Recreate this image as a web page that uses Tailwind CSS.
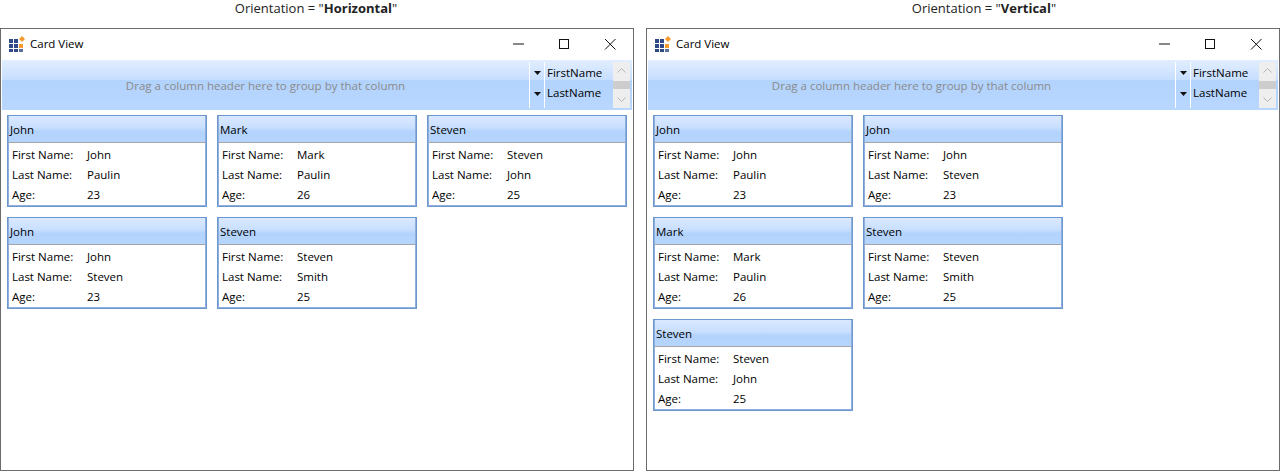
<!DOCTYPE html>
<html>
<head>
<meta charset="utf-8">
<script src="https://cdn.jsdelivr.net/npm/@tailwindcss/browser@4"></script>
</head>
<body class="bg-white">
<div class="w-[1280px] h-[471px] overflow-hidden flex gap-[12px] font-['Open_Sans',sans-serif] text-[11.5px] text-[#000]">

  <section class="w-[634px] flex flex-col">
    <p class="h-[28px] text-center text-[13px] leading-[16px] text-[#222] pr-[2px]">Orientation = "<b>Horizontal</b>"</p>
    <div class="h-[443px] border border-[#6b6b6b] flex flex-col">
      <div class="h-[31px] shrink-0 flex items-center pl-[8px] pb-[2px]">
        <svg width="16" height="16" viewBox="0 0 16 16"><rect x="0" y="3" width="4" height="4" fill="#2f4a86"/><rect x="5" y="3" width="4" height="4" fill="#2f4a86"/><rect x="0" y="8" width="4" height="4" fill="#2f4a86"/><rect x="5" y="8" width="4" height="4" fill="#2f4a86"/><rect x="10" y="8" width="4" height="4" fill="#f59b2f"/><rect x="0" y="13" width="4" height="3" fill="#2f4a86"/><rect x="5" y="13" width="4" height="3" fill="#2f4a86"/><rect x="10" y="13" width="4" height="3" fill="#5a6f9e"/><path d="M13 0l3 3-3 3-3-3z" fill="#f59b2f"/></svg>
        <span class="ml-[5px]">Card View</span>
        <div class="ml-auto flex items-center">
          <svg class="w-[46px] h-[16px]" viewBox="0 0 46 16"><path d="M18 8h11" stroke="#111" fill="none"/></svg>
          <svg class="w-[46px] h-[16px]" viewBox="0 0 46 16"><rect x="18.500" y="3.500" width="9" height="9" stroke="#111" fill="none"/></svg>
          <svg class="w-[46px] h-[16px]" viewBox="0 0 46 16"><path d="M18 3l10.500 10.500M28.500 3L18 13.500" stroke="#111" fill="none"/></svg>
        </div>
      </div>
      <div class="h-[50px] mx-[1px] shrink-0 flex bg-[linear-gradient(#e2eeff_0,#c6deff_40%,#b2d3fd_40%,#b9d7ff_100%)]">
        <div class="flex-1 flex items-center justify-center text-[#8a8a8a] pt-[1px]">Drag a column header here to group by that column</div>
        <div class="w-[16px] my-[2px] border-x border-white flex flex-col">
          <div class="h-[21px] flex items-center justify-center"><svg width="7" height="4" viewBox="0 0 7 4"><path d="M0 0h7L3.500 4z" fill="#111"/></svg></div>
          <div class="h-[22px] flex items-center justify-center"><svg width="7" height="4" viewBox="0 0 7 4"><path d="M0 0h7L3.500 4z" fill="#111"/></svg></div>
        </div>
        <div class="w-[68px] flex flex-col pl-[2px] pt-[3px]">
          <div class="h-[20px] leading-[20px]">FirstName</div>
          <div class="h-[20px] leading-[20px]">LastName</div>
        </div>
        <div class="w-[17px] my-[2px] mr-[2px] bg-[#eeeeee] flex flex-col items-center">
          <div class="h-[17px] flex items-center justify-center"><svg width="9" height="5" viewBox="0 0 9 5"><path d="M0.500 4.500L4.500 0.500l4 4" stroke="#b5b5b5" fill="none"/></svg></div>
          <div class="h-[8px] w-full mt-[2px] bg-[#cdcdcd]"></div>
          <div class="h-[17px] mt-auto flex items-center justify-center"><svg width="9" height="5" viewBox="0 0 9 5"><path d="M0.500 0.500l4 4 4-4" stroke="#b5b5b5" fill="none"/></svg></div>
        </div>
      </div>
      <div class="flex flex-wrap content-start gap-[10px] pl-[6px] pt-[5px] w-[632px]">

        <div class="w-[200px] h-[92px] border border-[#6d97cf] flex flex-col">
          <div class="h-[27px] shrink-0 pl-[1px] pt-[2px] flex items-center bg-[linear-gradient(#dbe9ff_0,#c8dfff_45%,#b3d3fd_60%,#b5d5ff_100%)] border-x border-x-[#8fb0dc] border-b border-b-[#a4a4a4]">John</div>
          <div class="flex-1 border-x border-b border-[#8fb0dc] grid grid-cols-[75px_1fr] auto-rows-[20px] items-center pl-[3px] pt-[2px]"><span>First Name:</span><span>John</span><span>Last Name:</span><span>Paulin</span><span>Age:</span><span>23</span></div>
        </div>
        <div class="w-[200px] h-[92px] border border-[#6d97cf] flex flex-col">
          <div class="h-[27px] shrink-0 pl-[1px] pt-[2px] flex items-center bg-[linear-gradient(#dbe9ff_0,#c8dfff_45%,#b3d3fd_60%,#b5d5ff_100%)] border-x border-x-[#8fb0dc] border-b border-b-[#a4a4a4]">Mark</div>
          <div class="flex-1 border-x border-b border-[#8fb0dc] grid grid-cols-[75px_1fr] auto-rows-[20px] items-center pl-[3px] pt-[2px]"><span>First Name:</span><span>Mark</span><span>Last Name:</span><span>Paulin</span><span>Age:</span><span>26</span></div>
        </div>
        <div class="w-[200px] h-[92px] border border-[#6d97cf] flex flex-col">
          <div class="h-[27px] shrink-0 pl-[1px] pt-[2px] flex items-center bg-[linear-gradient(#dbe9ff_0,#c8dfff_45%,#b3d3fd_60%,#b5d5ff_100%)] border-x border-x-[#8fb0dc] border-b border-b-[#a4a4a4]">Steven</div>
          <div class="flex-1 border-x border-b border-[#8fb0dc] grid grid-cols-[75px_1fr] auto-rows-[20px] items-center pl-[3px] pt-[2px]"><span>First Name:</span><span>Steven</span><span>Last Name:</span><span>John</span><span>Age:</span><span>25</span></div>
        </div>
        <div class="w-[200px] h-[92px] border border-[#6d97cf] flex flex-col">
          <div class="h-[27px] shrink-0 pl-[1px] pt-[2px] flex items-center bg-[linear-gradient(#dbe9ff_0,#c8dfff_45%,#b3d3fd_60%,#b5d5ff_100%)] border-x border-x-[#8fb0dc] border-b border-b-[#a4a4a4]">John</div>
          <div class="flex-1 border-x border-b border-[#8fb0dc] grid grid-cols-[75px_1fr] auto-rows-[20px] items-center pl-[3px] pt-[2px]"><span>First Name:</span><span>John</span><span>Last Name:</span><span>Steven</span><span>Age:</span><span>23</span></div>
        </div>
        <div class="w-[200px] h-[92px] border border-[#6d97cf] flex flex-col">
          <div class="h-[27px] shrink-0 pl-[1px] pt-[2px] flex items-center bg-[linear-gradient(#dbe9ff_0,#c8dfff_45%,#b3d3fd_60%,#b5d5ff_100%)] border-x border-x-[#8fb0dc] border-b border-b-[#a4a4a4]">Steven</div>
          <div class="flex-1 border-x border-b border-[#8fb0dc] grid grid-cols-[75px_1fr] auto-rows-[20px] items-center pl-[3px] pt-[2px]"><span>First Name:</span><span>Steven</span><span>Last Name:</span><span>Smith</span><span>Age:</span><span>25</span></div>
        </div>
      </div>
    </div>
  </section>

  <section class="w-[634px] flex flex-col">
    <p class="h-[28px] text-center text-[13px] leading-[16px] text-[#222] pl-[42px]">Orientation = "<b>Vertical</b>"</p>
    <div class="h-[443px] border border-[#6b6b6b] flex flex-col">
      <div class="h-[31px] shrink-0 flex items-center pl-[8px] pb-[2px]">
        <svg width="16" height="16" viewBox="0 0 16 16"><rect x="0" y="3" width="4" height="4" fill="#2f4a86"/><rect x="5" y="3" width="4" height="4" fill="#2f4a86"/><rect x="0" y="8" width="4" height="4" fill="#2f4a86"/><rect x="5" y="8" width="4" height="4" fill="#2f4a86"/><rect x="10" y="8" width="4" height="4" fill="#f59b2f"/><rect x="0" y="13" width="4" height="3" fill="#2f4a86"/><rect x="5" y="13" width="4" height="3" fill="#2f4a86"/><rect x="10" y="13" width="4" height="3" fill="#5a6f9e"/><path d="M13 0l3 3-3 3-3-3z" fill="#f59b2f"/></svg>
        <span class="ml-[5px]">Card View</span>
        <div class="ml-auto flex items-center">
          <svg class="w-[46px] h-[16px]" viewBox="0 0 46 16"><path d="M18 8h11" stroke="#111" fill="none"/></svg>
          <svg class="w-[46px] h-[16px]" viewBox="0 0 46 16"><rect x="18.500" y="3.500" width="9" height="9" stroke="#111" fill="none"/></svg>
          <svg class="w-[46px] h-[16px]" viewBox="0 0 46 16"><path d="M18 3l10.500 10.500M28.500 3L18 13.500" stroke="#111" fill="none"/></svg>
        </div>
      </div>
      <div class="h-[50px] mx-[1px] shrink-0 flex bg-[linear-gradient(#e2eeff_0,#c6deff_40%,#b2d3fd_40%,#b9d7ff_100%)]">
        <div class="flex-1 flex items-center justify-center text-[#8a8a8a] pt-[1px]">Drag a column header here to group by that column</div>
        <div class="w-[16px] my-[2px] border-x border-white flex flex-col">
          <div class="h-[21px] flex items-center justify-center"><svg width="7" height="4" viewBox="0 0 7 4"><path d="M0 0h7L3.500 4z" fill="#111"/></svg></div>
          <div class="h-[22px] flex items-center justify-center"><svg width="7" height="4" viewBox="0 0 7 4"><path d="M0 0h7L3.500 4z" fill="#111"/></svg></div>
        </div>
        <div class="w-[68px] flex flex-col pl-[2px] pt-[3px]">
          <div class="h-[20px] leading-[20px]">FirstName</div>
          <div class="h-[20px] leading-[20px]">LastName</div>
        </div>
        <div class="w-[17px] my-[2px] mr-[2px] bg-[#eeeeee] flex flex-col items-center">
          <div class="h-[17px] flex items-center justify-center"><svg width="9" height="5" viewBox="0 0 9 5"><path d="M0.500 4.500L4.500 0.500l4 4" stroke="#b5b5b5" fill="none"/></svg></div>
          <div class="h-[8px] w-full mt-[2px] bg-[#cdcdcd]"></div>
          <div class="h-[17px] mt-auto flex items-center justify-center"><svg width="9" height="5" viewBox="0 0 9 5"><path d="M0.500 0.500l4 4 4-4" stroke="#b5b5b5" fill="none"/></svg></div>
        </div>
      </div>
      <div class="flex flex-wrap content-start gap-[10px] pl-[6px] pt-[5px] w-[420px]">
        <div class="w-[200px] h-[92px] border border-[#6d97cf] flex flex-col">
          <div class="h-[27px] shrink-0 pl-[1px] pt-[2px] flex items-center bg-[linear-gradient(#dbe9ff_0,#c8dfff_45%,#b3d3fd_60%,#b5d5ff_100%)] border-x border-x-[#8fb0dc] border-b border-b-[#a4a4a4]">John</div>
          <div class="flex-1 border-x border-b border-[#8fb0dc] grid grid-cols-[75px_1fr] auto-rows-[20px] items-center pl-[3px] pt-[2px]"><span>First Name:</span><span>John</span><span>Last Name:</span><span>Paulin</span><span>Age:</span><span>23</span></div>
        </div>
        <div class="w-[200px] h-[92px] border border-[#6d97cf] flex flex-col">
          <div class="h-[27px] shrink-0 pl-[1px] pt-[2px] flex items-center bg-[linear-gradient(#dbe9ff_0,#c8dfff_45%,#b3d3fd_60%,#b5d5ff_100%)] border-x border-x-[#8fb0dc] border-b border-b-[#a4a4a4]">John</div>
          <div class="flex-1 border-x border-b border-[#8fb0dc] grid grid-cols-[75px_1fr] auto-rows-[20px] items-center pl-[3px] pt-[2px]"><span>First Name:</span><span>John</span><span>Last Name:</span><span>Steven</span><span>Age:</span><span>23</span></div>
        </div>
        <div class="w-[200px] h-[92px] border border-[#6d97cf] flex flex-col">
          <div class="h-[27px] shrink-0 pl-[1px] pt-[2px] flex items-center bg-[linear-gradient(#dbe9ff_0,#c8dfff_45%,#b3d3fd_60%,#b5d5ff_100%)] border-x border-x-[#8fb0dc] border-b border-b-[#a4a4a4]">Mark</div>
          <div class="flex-1 border-x border-b border-[#8fb0dc] grid grid-cols-[75px_1fr] auto-rows-[20px] items-center pl-[3px] pt-[2px]"><span>First Name:</span><span>Mark</span><span>Last Name:</span><span>Paulin</span><span>Age:</span><span>26</span></div>
        </div>
        <div class="w-[200px] h-[92px] border border-[#6d97cf] flex flex-col">
          <div class="h-[27px] shrink-0 pl-[1px] pt-[2px] flex items-center bg-[linear-gradient(#dbe9ff_0,#c8dfff_45%,#b3d3fd_60%,#b5d5ff_100%)] border-x border-x-[#8fb0dc] border-b border-b-[#a4a4a4]">Steven</div>
          <div class="flex-1 border-x border-b border-[#8fb0dc] grid grid-cols-[75px_1fr] auto-rows-[20px] items-center pl-[3px] pt-[2px]"><span>First Name:</span><span>Steven</span><span>Last Name:</span><span>Smith</span><span>Age:</span><span>25</span></div>
        </div>
        <div class="w-[200px] h-[92px] border border-[#6d97cf] flex flex-col">
          <div class="h-[27px] shrink-0 pl-[1px] pt-[2px] flex items-center bg-[linear-gradient(#dbe9ff_0,#c8dfff_45%,#b3d3fd_60%,#b5d5ff_100%)] border-x border-x-[#8fb0dc] border-b border-b-[#a4a4a4]">Steven</div>
          <div class="flex-1 border-x border-b border-[#8fb0dc] grid grid-cols-[75px_1fr] auto-rows-[20px] items-center pl-[3px] pt-[2px]"><span>First Name:</span><span>Steven</span><span>Last Name:</span><span>John</span><span>Age:</span><span>25</span></div>
        </div>
      </div>
    </div>
  </section>
</div>
</body>
</html>
